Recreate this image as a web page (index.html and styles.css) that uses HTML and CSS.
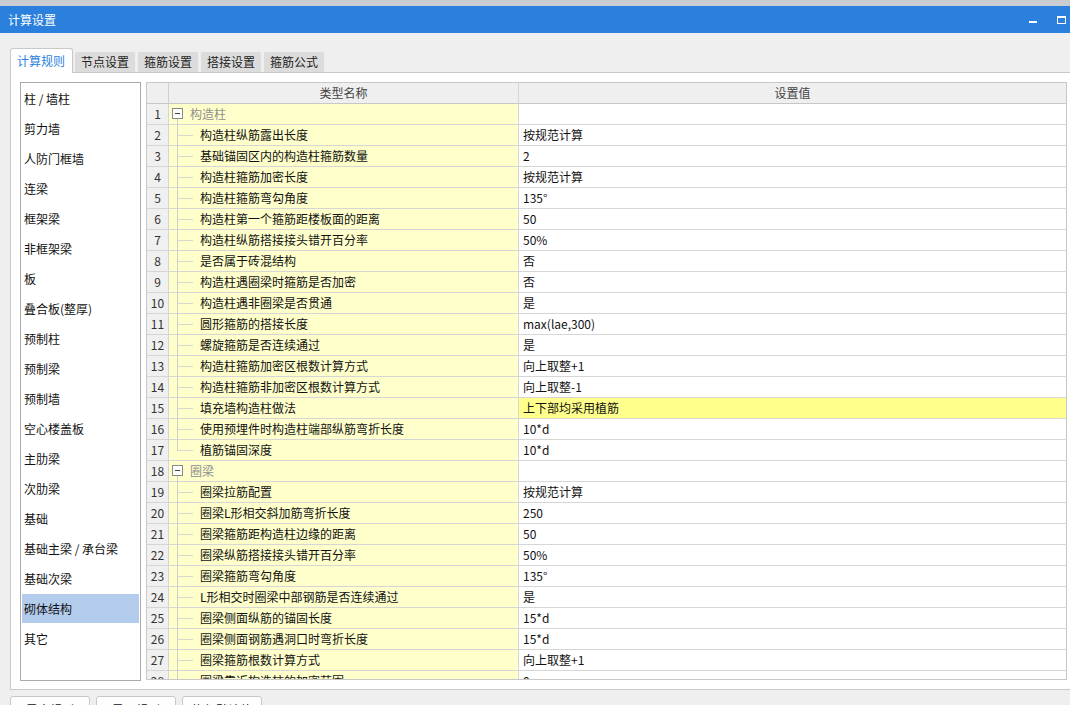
FILE: index.html
```html
<!DOCTYPE html>
<html lang="zh">
<head>
<meta charset="utf-8">
<title>计算设置</title>
<link rel="stylesheet" href="styles.css">
</head>
<body>
<div class="topstrip"></div>
<div class="titlebar">
  <span class="title">计算设置</span>
  <div class="winbtns"><span class="wmin"></span><span class="wmax"></span></div>
</div>
<div class="main">
  <div class="tabs">
    <div class="tab active">计算规则</div>
    <div class="tab">节点设置</div>
    <div class="tab">箍筋设置</div>
    <div class="tab">搭接设置</div>
    <div class="tab">箍筋公式</div>
  </div>
  <div class="panel">
    <ul class="cats">
      <li>柱 / 墙柱</li>
      <li>剪力墙</li>
      <li>人防门框墙</li>
      <li>连梁</li>
      <li>框架梁</li>
      <li>非框架梁</li>
      <li>板</li>
      <li>叠合板(整厚)</li>
      <li>预制柱</li>
      <li>预制梁</li>
      <li>预制墙</li>
      <li>空心楼盖板</li>
      <li>主肋梁</li>
      <li>次肋梁</li>
      <li>基础</li>
      <li>基础主梁 / 承台梁</li>
      <li>基础次梁</li>
      <li class="sel">砌体结构</li>
      <li>其它</li>
    </ul>
    <div class="grid">
      <div class="row head"><div class="c num"></div><div class="c name">类型名称</div><div class="c val">设置值</div></div>
      <div class="row"><div class="c num">1</div><div class="c name group"><span class="tog"></span><span class="gt">构造柱</span></div><div class="c val"></div></div>
      <div class="row"><div class="c num">2</div><div class="c name child">构造柱纵筋露出长度</div><div class="c val">按规范计算</div></div>
      <div class="row"><div class="c num">3</div><div class="c name child">基础锚固区内的构造柱箍筋数量</div><div class="c val">2</div></div>
      <div class="row"><div class="c num">4</div><div class="c name child">构造柱箍筋加密长度</div><div class="c val">按规范计算</div></div>
      <div class="row"><div class="c num">5</div><div class="c name child">构造柱箍筋弯勾角度</div><div class="c val">135°</div></div>
      <div class="row"><div class="c num">6</div><div class="c name child">构造柱第一个箍筋距楼板面的距离</div><div class="c val">50</div></div>
      <div class="row"><div class="c num">7</div><div class="c name child">构造柱纵筋搭接接头错开百分率</div><div class="c val">50%</div></div>
      <div class="row"><div class="c num">8</div><div class="c name child">是否属于砖混结构</div><div class="c val">否</div></div>
      <div class="row"><div class="c num">9</div><div class="c name child">构造柱遇圈梁时箍筋是否加密</div><div class="c val">否</div></div>
      <div class="row"><div class="c num">10</div><div class="c name child">构造柱遇非圈梁是否贯通</div><div class="c val">是</div></div>
      <div class="row"><div class="c num">11</div><div class="c name child">圆形箍筋的搭接长度</div><div class="c val">max(lae,300)</div></div>
      <div class="row"><div class="c num">12</div><div class="c name child">螺旋箍筋是否连续通过</div><div class="c val">是</div></div>
      <div class="row"><div class="c num">13</div><div class="c name child">构造柱箍筋加密区根数计算方式</div><div class="c val">向上取整+1</div></div>
      <div class="row"><div class="c num">14</div><div class="c name child">构造柱箍筋非加密区根数计算方式</div><div class="c val">向上取整-1</div></div>
      <div class="row"><div class="c num">15</div><div class="c name child">填充墙构造柱做法</div><div class="c val hl">上下部均采用植筋</div></div>
      <div class="row"><div class="c num">16</div><div class="c name child">使用预埋件时构造柱端部纵筋弯折长度</div><div class="c val">10*d</div></div>
      <div class="row"><div class="c num">17</div><div class="c name child last">植筋锚固深度</div><div class="c val">10*d</div></div>
      <div class="row"><div class="c num">18</div><div class="c name group"><span class="tog"></span><span class="gt">圈梁</span></div><div class="c val"></div></div>
      <div class="row"><div class="c num">19</div><div class="c name child">圈梁拉筋配置</div><div class="c val">按规范计算</div></div>
      <div class="row"><div class="c num">20</div><div class="c name child">圈梁L形相交斜加筋弯折长度</div><div class="c val">250</div></div>
      <div class="row"><div class="c num">21</div><div class="c name child">圈梁箍筋距构造柱边缘的距离</div><div class="c val">50</div></div>
      <div class="row"><div class="c num">22</div><div class="c name child">圈梁纵筋搭接接头错开百分率</div><div class="c val">50%</div></div>
      <div class="row"><div class="c num">23</div><div class="c name child">圈梁箍筋弯勾角度</div><div class="c val">135°</div></div>
      <div class="row"><div class="c num">24</div><div class="c name child">L形相交时圈梁中部钢筋是否连续通过</div><div class="c val">是</div></div>
      <div class="row"><div class="c num">25</div><div class="c name child">圈梁侧面纵筋的锚固长度</div><div class="c val">15*d</div></div>
      <div class="row"><div class="c num">26</div><div class="c name child">圈梁侧面钢筋遇洞口时弯折长度</div><div class="c val">15*d</div></div>
      <div class="row"><div class="c num">27</div><div class="c name child">圈梁箍筋根数计算方式</div><div class="c val">向上取整+1</div></div>
      <div class="row"><div class="c num">28</div><div class="c name child">圈梁靠近构造柱的加密范围</div><div class="c val">0</div></div>
    </div>
  </div>
  <div class="buttons">
    <button class="btn">导出规则</button>
    <button class="btn">导入规则</button>
    <button class="btn">恢复默认值</button>
  </div>
</div>
</body>
</html>
```
FILE: styles.css
```css
* { box-sizing: border-box; }
html, body { margin: 0; padding: 0; }
body {
  width: 1070px;
  height: 705px;
  overflow: hidden;
  background: #efefef;
  font-family: "Noto Sans CJK SC", "Microsoft YaHei", "Liberation Sans", sans-serif;
  font-size: 12px;
  color: #111;
}
.topstrip { height: 6px; background: #c9cdd2; }
.titlebar {
  height: 27px;
  background: #2b7fdd;
  color: #fff;
  display: flex;
  align-items: center;
  justify-content: space-between;
  padding: 0 4px 0 8px;
  line-height: 27px;
}
.winbtns { display: flex; align-items: flex-start; gap: 20px; align-self: stretch; }
.wmin { width: 8px; height: 2px; background: #fff; margin-top: 15px; }
.wmax { width: 9px; height: 8px; border: 1px solid #fff; border-top-width: 2px; margin-top: 10px; }

.main { padding-top: 15px; }
.tabs {
  display: flex;
  align-items: flex-end;
  gap: 3px;
  margin-left: 10px;
  height: 24px;
  position: relative;
  z-index: 1;
}
.tab {
  height: 20px;
  line-height: 20px;
  padding: 0 6px;
  background: #dcdcdc;
  border-radius: 2px 2px 0 0;
  color: #222;
}
.tab.active {
  height: 25px;
  line-height: 24px;
  margin-bottom: -1px;
  margin-right: -1px;
  padding: 0 7px 0 6px;
  background: #fff;
  color: #2b7fdd;
  border: 1px solid #c8c8c8;
  border-bottom: none;
  border-radius: 3px 3px 0 0;
}
.panel {
  margin-left: 10px;
  height: 618px;
  border: 1px solid #c8c8c8;
  border-right: none;
  background: #fff;
  display: flex;
  align-items: flex-start;
  gap: 5px;
  padding: 9px 0 0 9px;
}
.cats {
  list-style: none;
  margin: 0;
  padding: 1px;
  width: 121px;
  height: 599px;
  border: 1px solid #ababab;
  background: #fff;
  flex: none;
}
.cats li {
  height: 29px;
  line-height: 29px;
  margin-bottom: 1px;
  padding-left: 2px;
  white-space: nowrap;
  color: #111;
}
.cats li.sel { background: #b4ccec; }

.grid {
  width: 921px;
  height: 598px;
  border: 1px solid #c8c8c8;
  border-right: none;
  overflow: hidden;
  background: #fff;
  flex: none;
}
.row { display: flex; }
.c {
  height: 21px;
  line-height: 20px;
  border-right: 1px solid #d6d6d6;
  border-bottom: 1px solid #d6d6d6;
  white-space: nowrap;
  overflow: hidden;
}
.num { width: 22px; text-align: center; background: #f0f0f0; color: #333; }
.name { width: 350px; background: #ffffcc; color: #111; }
.val { width: 548px; padding-left: 4px; background: #fff; color: #111; border-right-color: #c8c8c8; }
.val.hl { background: #ffff8c; }
.head .c {
  background: #efefef;
  text-align: center;
  color: #444;
  padding-left: 0;
  border-bottom-color: #c8c8c8;
}
.head .num { border-right-color: #d0d0d0; }

.name.child {
  padding-left: 31px;
  background:
    linear-gradient(#cfcfc4, #cfcfc4) 8px 0 / 1px 100% no-repeat,
    linear-gradient(#d8d8cc, #d8d8cc) 9px 10px / 15px 1px no-repeat,
    #ffffcc;
}
.name.child.last {
  background:
    linear-gradient(#cfcfc4, #cfcfc4) 8px 0 / 1px 11px no-repeat,
    linear-gradient(#d8d8cc, #d8d8cc) 9px 10px / 15px 1px no-repeat,
    #ffffcc;
}
.name.group {
  display: flex;
  align-items: center;
  padding-left: 3px;
  background:
    linear-gradient(#cfcfc4, #cfcfc4) 8px 15px / 1px 6px no-repeat,
    #ffffcc;
}
.tog {
  width: 11px;
  height: 11px;
  border: 1px solid #8a8a8a;
  background: #fff;
  display: flex;
  align-items: center;
  justify-content: center;
  margin-bottom: 1px;
}
.tog::before { content: ""; width: 5px; height: 1px; background: #444; }
.gt { margin-left: 7px; color: #8f8f8f; }

.buttons { display: flex; gap: 6px; margin: 6px 0 0 10px; }
.btn {
  width: 80px;
  height: 26px;
  border: 1px solid #c8c8c8;
  border-radius: 3px;
  background: #fdfdfd;
  font-family: inherit;
  font-size: 12px;
  color: #111;
  padding: 0;
}
```
